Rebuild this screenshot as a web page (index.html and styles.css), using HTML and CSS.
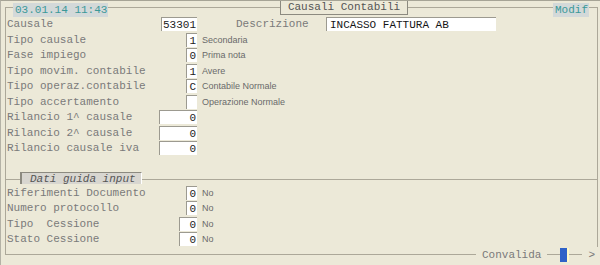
FILE: index.html
```html
<!DOCTYPE html>
<html lang="it">
<head>
    <meta charset="UTF-8">
    <title>Causali Contabili</title>
    <link rel="stylesheet" href="styles.css">
</head>
<body>
    <div class="screen">
        <div class="tab date">03.01.14 11:43</div>
        <div class="tab title">Causali Contabili</div>
        <div class="tab mode">Modif</div>

        <div class="frame">
            <div class="row">
                <div class="field"><span class="lbl">Causale</span><span class="inp w5">53301</span></div>
                <span class="lbl desc-lbl">Descrizione</span>
                <span class="inp wide">INCASSO FATTURA AB</span>
            </div>
            <div class="row">
                <div class="field"><span class="lbl">Tipo causale</span><span class="inp w1">1</span></div>
                <span class="note">Secondaria</span>
            </div>
            <div class="row">
                <div class="field"><span class="lbl">Fase impiego</span><span class="inp w1">0</span></div>
                <span class="note">Prima nota</span>
            </div>
            <div class="row">
                <div class="field"><span class="lbl">Tipo movim. contabile</span><span class="inp w1">1</span></div>
                <span class="note">Avere</span>
            </div>
            <div class="row">
                <div class="field"><span class="lbl">Tipo operaz.contabile</span><span class="inp w1">C</span></div>
                <span class="note">Contabile Normale</span>
            </div>
            <div class="row">
                <div class="field"><span class="lbl">Tipo accertamento</span><span class="inp w1"></span></div>
                <span class="note">Operazione Normale</span>
            </div>
            <div class="row">
                <div class="field"><span class="lbl">Rilancio 1^ causale</span><span class="inp w6">0</span></div>
            </div>
            <div class="row">
                <div class="field"><span class="lbl">Rilancio 2^ causale</span><span class="inp w6">0</span></div>
            </div>
            <div class="row">
                <div class="field"><span class="lbl">Rilancio causale iva</span><span class="inp w6">0</span></div>
            </div>

            <div class="section"><span class="legend">Dati guida input</span></div>

            <div class="row">
                <div class="field"><span class="lbl">Riferimenti Documento</span><span class="inp w1">0</span></div>
                <span class="note">No</span>
            </div>
            <div class="row">
                <div class="field"><span class="lbl">Numero protocollo</span><span class="inp w1">0</span></div>
                <span class="note">No</span>
            </div>
            <div class="row">
                <div class="field"><span class="lbl">Tipo  Cessione</span><span class="inp w2">0</span></div>
                <span class="note">No</span>
            </div>
            <div class="row">
                <div class="field"><span class="lbl">Stato Cessione</span><span class="inp w2">0</span></div>
                <span class="note">No</span>
            </div>
        </div>

        <div class="footer">
            <span class="cmd">Convalida</span>
            <span class="cursor"></span>
            <span class="next">&gt;</span>
        </div>
    </div>
</body>
</html>
```

FILE: styles.css
```css
body {
    margin: 0;
    background: #ece9d8;
    font-family: "Liberation Mono", monospace;
    font-size: 11px;
    color: #7a7a7a;
}

.screen {
    position: relative;
    height: 265px;
    box-sizing: border-box;
    border-top: 1px solid #a6a496;
    border-left: 1px solid #b4b2a6;
    overflow: hidden;
}

/* tabs sitting on the frame border */
.tab {
    position: absolute;
    height: 14px;
    line-height: 14px;
    box-sizing: border-box;
    white-space: pre;
}

.date {
    left: 12px;
    top: 2px;
    width: 95px;
    padding-left: 2px;
    background: #d3d9d9;
    color: #3a9898;
}

.title {
    left: 279px;
    top: -1px;
    width: 128px;
    height: 15px;
    text-align: center;
    background: #ece9d8;
    color: #555;
    border: 1px solid #8c8a80;
    border-top: none;
}

.mode {
    left: 552px;
    top: 2px;
    width: 36px;
    padding-left: 2px;
    background: #d3d9d9;
    color: #3a9898;
}

.frame {
    margin: 6px 2px 0 4px;
    height: 248px;
    box-sizing: border-box;
    border: 1px solid #aca899;
    padding-top: 8.5px;
}

.row {
    display: flex;
    align-items: center;
    height: 15.5px;
    padding-left: 1px;
    white-space: pre;
}

.field {
    width: 190px;
    display: flex;
    justify-content: space-between;
    align-items: center;
}

.inp {
    display: block;
    height: 14px;
    line-height: 14px;
    box-sizing: border-box;
    background: #fff;
    border-top: 1px solid #9c9a90;
    border-left: 1px solid #9c9a90;
    padding-right: 1px;
    text-align: right;
    color: #222;
}

.w1 { width: 11px; }
.w2 { width: 18px; }
.w5 { width: 36px; }
.w6 { width: 38px; }

.desc-lbl {
    margin-left: 39px;
    width: 90px;
}

.wide {
    width: 170px;
    padding-left: 3px;
    text-align: left;
    color: #151515;
}

.note {
    margin-left: 5px;
    font-family: "Liberation Sans", Arial, sans-serif;
    font-size: 9px;
    color: #6a6a6a;
}

.section {
    position: relative;
    height: 13px;
    margin-top: 16px;
}

.section::before {
    content: "";
    position: absolute;
    left: 0;
    right: 0;
    top: 7px;
    border-top: 1px solid #aca899;
}

.legend {
    position: relative;
    display: block;
    width: 122px;
    height: 12px;
    line-height: 12px;
    margin-left: 14px;
    padding-left: 8px;
    box-sizing: border-box;
    background: #d8d6d0;
    border-top: 1px solid #8c8a80;
    border-left: 2px solid #8c8a80;
    border-right: 1px solid #fff;
    font-style: italic;
    color: #555;
}

.footer {
    position: absolute;
    left: 475px;
    top: 247px;
    display: flex;
    align-items: center;
    height: 14px;
}

.cmd {
    padding: 0 6px;
    background: #ece9d8;
    line-height: 14px;
}

.cursor {
    width: 7px;
    height: 14px;
    margin-left: 13px;
    background: #2f62c8;
    border-right: 2px solid #fff8c8;
}

.next {
    width: 16px;
    height: 16px;
    margin-left: 13px;
    padding-left: 6px;
    box-sizing: border-box;
    background: #ece9d8;
    line-height: 16px;
    color: #777;
}
```
